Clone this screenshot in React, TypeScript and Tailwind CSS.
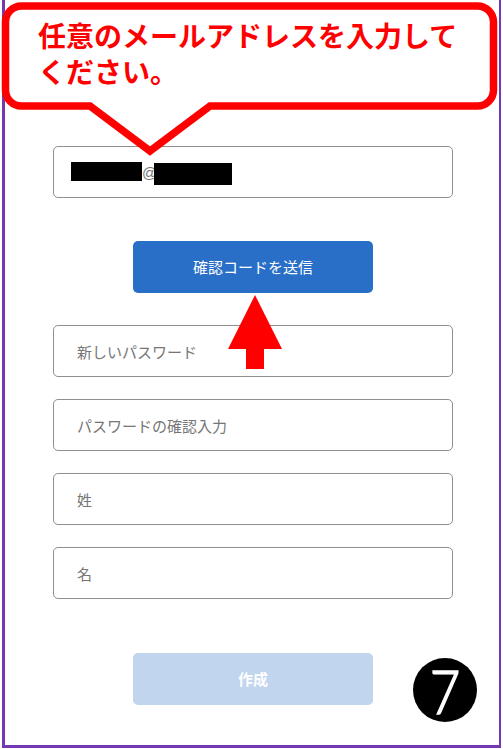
import React from "react";

const jp = { fontFamily: '"Noto Sans CJK JP", "Noto Sans", sans-serif' };

function Field({ placeholder }: { placeholder: string }) {
  return (
    <div className="w-[400px] h-[52px] border border-[#8f8f8f] rounded-[5px] flex items-center pl-[23px] bg-white">
      <span className="text-[15px] text-[#767676] leading-none">{placeholder}</span>
    </div>
  );
}

export default function App() {
  return (
    <div className="relative w-[503px] h-[749px] bg-white overflow-hidden" style={jp}>
      <div className="ml-[2px] w-[499px] h-[748px] border-l-[3px] border-r-[2px] border-b-[3px] border-[#7438b5] flex flex-col items-start pl-[48px] pt-[146px]">
        <div className="w-[400px] h-[52px] border border-[#8f8f8f] rounded-[5px] flex items-center pl-[17px] bg-white">
          <span className="w-[71px] h-[19px] bg-black -mt-[2px]" />
          <span
            className="text-[15px] text-[#777] leading-none w-[12px] mt-[1px]"
            style={{ fontFamily: '"Liberation Sans", Arial, sans-serif' }}
          >
            @
          </span>
          <span className="w-[78px] h-[22px] bg-black mt-[3px]" />
        </div>
        <button className="mt-[43px] ml-[80px] w-[240px] h-[52px] rounded-[5px] bg-[#2a6fc7] text-white text-[15px] flex items-center justify-center">
          確認コードを送信
        </button>
        <div className="mt-[32px] flex flex-col gap-[22px]">
          <Field placeholder="新しいパスワード" />
          <Field placeholder="パスワードの確認入力" />
          <Field placeholder="姓" />
          <Field placeholder="名" />
        </div>
        <button className="mt-[54px] ml-[80px] w-[240px] h-[52px] rounded-[5px] bg-[#c1d5ee] text-white text-[15px] font-semibold flex items-center justify-center">
          作成
        </button>
      </div>

      {/* callout */}
      <svg className="absolute left-0 top-0" width="503" height="170" viewBox="0 0 503 170">
        <path
          d="M 21.5 6 H 477.5 A 16 16 0 0 1 493.5 22 V 90 A 16 16 0 0 1 477.5 106 H 210 L 150 151 L 90 106 H 21.5 A 16 16 0 0 1 5.5 90 V 22 A 16 16 0 0 1 21.5 6 Z"
          fill="#ffffff"
          stroke="#ff0000"
          strokeWidth="7.5"
          strokeLinejoin="miter"
        />
      </svg>
      <div className="absolute left-[38px] top-[17px] w-[450px] text-[28px] font-bold text-[#ff0000]">
        <div className="h-[36px] leading-[36px]">任意のメールアドレスを入力して</div>
        <div className="h-[36px] leading-[36px]">ください。</div>
      </div>

      {/* arrow */}
      <svg className="absolute left-0 top-0" width="503" height="400" viewBox="0 0 503 400">
        <polygon points="255,295 282,349 264,349 264,369 246,369 246,349 228,349" fill="#ff0000" />
      </svg>

      {/* badge */}
      <div className="absolute left-[413px] top-[658px] w-[64px] h-[64px] rounded-full bg-black flex items-center justify-center">
        <span
          className="text-white text-[62px] leading-none -mt-[1px] scale-x-[0.85]"
          style={{
            fontFamily: 'Lato, Roboto, "Liberation Sans", sans-serif',
            fontWeight: 300,
            WebkitTextStroke: "1.5px #ffffff",
          }}
        >
          7
        </span>
      </div>
    </div>
  );
}
